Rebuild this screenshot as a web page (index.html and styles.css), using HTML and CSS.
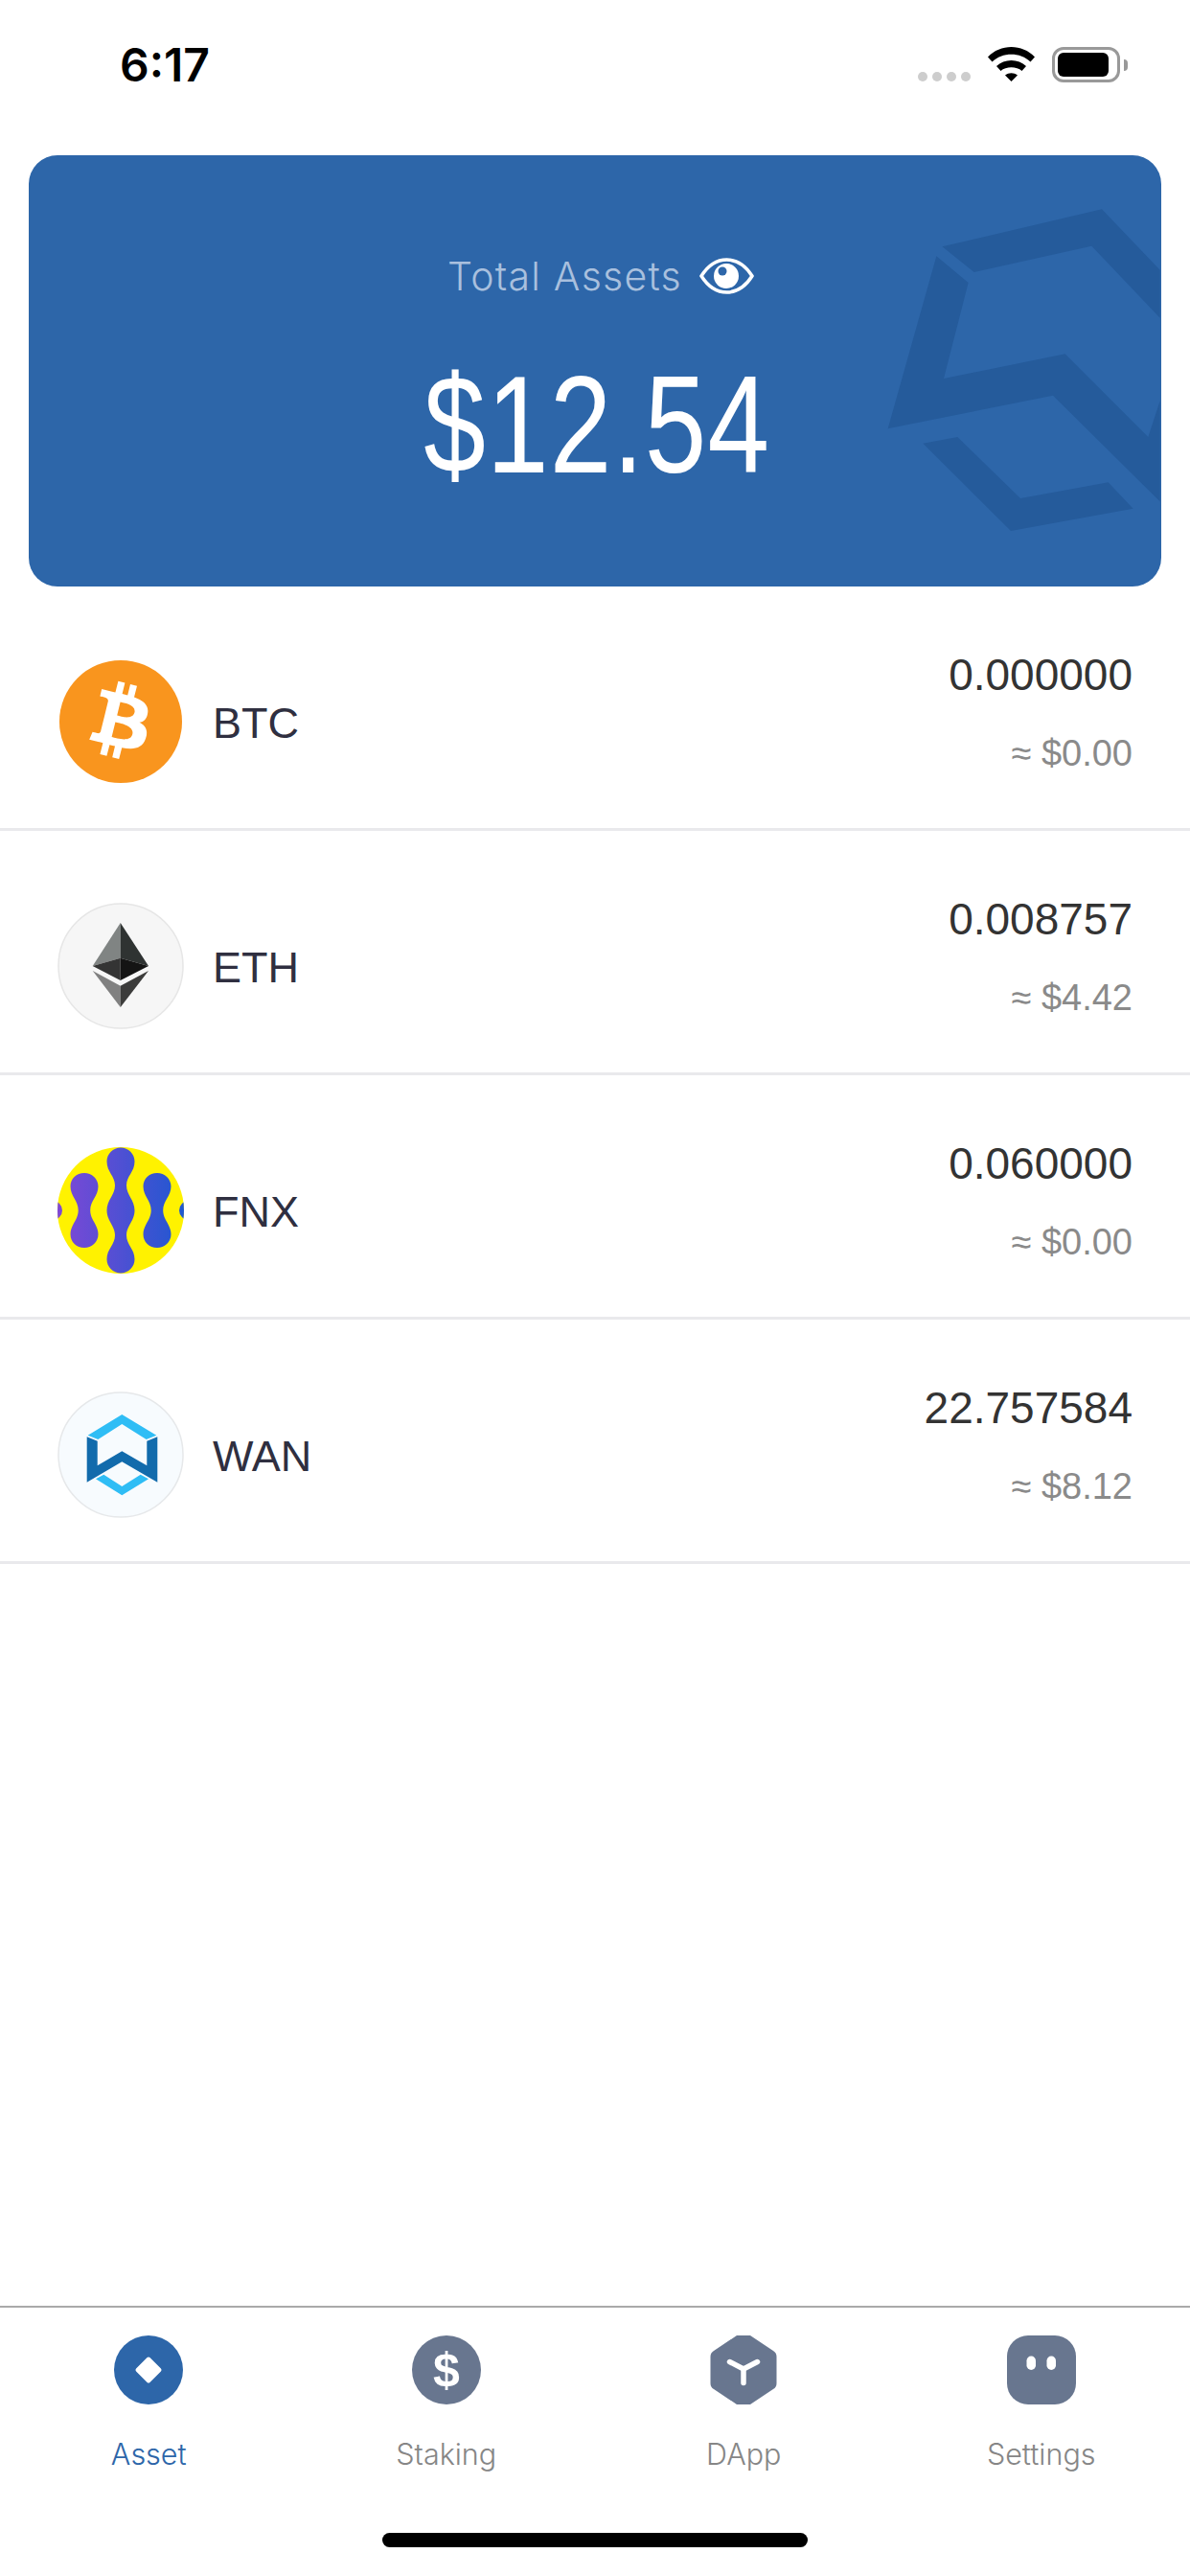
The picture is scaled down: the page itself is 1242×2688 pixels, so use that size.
FILE: index.html
```html
<!DOCTYPE html>
<html lang="en">
<head>
    <meta charset="UTF-8">
    <meta name="viewport" content="width=device-width, initial-scale=1.0">
    <title>Wallet</title>
    <link rel="stylesheet" href="styles.css">
</head>
<body>
<div class="app">
    <div class="status-bar">
        <span class="time">6:17</span>
        <div class="status-icons">
            <div class="signal"><i></i><i></i><i></i><i></i></div>
            <svg class="wifi" viewBox="0 0 49 36">
                <path d="M0 10.5C13-3.5 36-3.5 49 10.5L44.5 15.5C34 5 15 5 4.5 15.5Z"/>
                <path d="M9 20C17 12 32 12 40 20L35.5 25C30 20 19 20 13.5 25Z"/>
                <path d="M18 29.5C22 26.5 27 26.5 31 29.5L24.5 36Z"/>
            </svg>
            <div class="battery"><div class="battery-body"><div class="battery-level"></div></div><div class="battery-nub"></div></div>
        </div>
    </div>

    <div class="card">
        <svg class="card-logo" viewBox="0 6 936 1350">
            <polygon points="250,292 750,175 932,365 932,515 718,290 350,372"/>
            <polygon points="232,322 332,405 255,705 635,628 895,888 932,775 932,1090 597,758 80,862"/>
            <polygon points="190,908 298,888 495,1080 770,1030 848,1112 465,1182"/>
        </svg>
        <div class="total-row">
            <span class="total-label">Total Assets</span>
            <svg class="eye" viewBox="0 0 57 38">
                <path d="M2 19C9 8 18 2 28.5 2S48 8 55 19C48 30 39 36 28.5 36S9 30 2 19Z" fill="none" stroke="#fff" stroke-width="3.5"/>
                <circle cx="28" cy="19" r="13" fill="#fff"/>
                <circle cx="24" cy="14" r="4.5" fill="#2d66a9"/>
            </svg>
        </div>
        <div class="total-amount">$12.54</div>
    </div>

    <div class="coin-list">
        <div class="coin-row">
            <svg class="coin-icon" viewBox="0 0 132 132">
                <circle cx="66" cy="66" r="64" fill="#f9951e"/>
                <path transform="translate(2 2) scale(2)" fill="#fff" d="M46.1,27.4c0.6-4.3-2.6-6.6-7.1-8.2l1.5-5.8l-3.5-0.9l-1.4,5.7c-0.9-0.2-1.9-0.5-2.8-0.7l1.4-5.7l-3.5-0.9l-1.5,5.8c-0.8-0.2-1.5-0.3-2.2-0.5l0,0l-4.9-1.2l-0.9,3.8c0,0,2.6,0.6,2.6,0.6c1.4,0.4,1.7,1.3,1.6,2l-1.6,6.6c0.1,0,0.2,0.1,0.4,0.1c-0.1,0-0.2-0.1-0.4-0.1l-2.3,9.2c-0.2,0.4-0.6,1.1-1.6,0.8c0,0.1-2.6-0.6-2.6-0.6l-1.7,4l4.6,1.1c0.9,0.2,1.7,0.4,2.5,0.6l-1.5,5.9l3.5,0.9l1.5-5.8c1,0.3,1.9,0.5,2.8,0.7l-1.4,5.8l3.5,0.9l1.5-5.9c6,1.1,10.5,0.7,12.4-4.7c1.5-4.4-0.1-6.9-3.2-8.5C44.1,32.2,45.7,30.6,46.1,27.4z M38.1,38.6c-1.1,4.4-8.4,2-10.8,1.4l1.9-7.7C31.6,32.9,39.2,34.1,38.1,38.6z M39.2,27.3c-1,4-7.1,2-9.1,1.5l1.7-7C33.8,22.3,40.2,23.2,39.2,27.3z"/>
            </svg>
            <span class="coin-name">BTC</span>
            <div class="coin-values">
                <span class="coin-amount">0.000000</span>
                <span class="coin-usd">≈ $0.00</span>
            </div>
        </div>
        <div class="coin-row">
            <svg class="coin-icon" viewBox="0 0 132 132">
                <circle cx="66" cy="66" r="65" fill="#f6f6f6" stroke="#e6e6e6" stroke-width="1.5"/>
                <polygon points="65.7,21 36.7,66 65.7,57.7" fill="#808483"/>
                <polygon points="65.7,21 95,66 65.7,57.7" fill="#2f3332"/>
                <polygon points="36.7,66 65.7,57.7 65.7,81" fill="#343434"/>
                <polygon points="95,66 65.7,57.7 65.7,81" fill="#141414"/>
                <polygon points="36.7,71 65.7,86.7 65.7,109" fill="#808080"/>
                <polygon points="95,71 65.7,86.7 65.7,109" fill="#3c3c3b"/>
            </svg>
            <span class="coin-name">ETH</span>
            <div class="coin-values">
                <span class="coin-amount">0.008757</span>
                <span class="coin-usd">≈ $4.42</span>
            </div>
        </div>
        <div class="coin-row">
            <svg class="coin-icon" viewBox="0 0 132 132">
                <defs>
                    <linearGradient id="fnxGrad" gradientUnits="userSpaceOnUse" x1="0" y1="0" x2="132" y2="0">
                        <stop offset="0" stop-color="#7f48d6"/>
                        <stop offset="1" stop-color="#1f58d0"/>
                    </linearGradient>
                    <clipPath id="fnxClip"><circle cx="66" cy="66" r="66"/></clipPath>
                </defs>
                <g clip-path="url(#fnxClip)">
                    <rect width="132" height="132" fill="#fff200"/>
                    <g fill="url(#fnxGrad)">
                        <path d="M66 .5C74 .5 80.5 7 80.5 15C80.5 26 72 30 72 40C72 50 80.5 55 80.5 66C80.5 77 72 82 72 92C72 102 80.5 106 80.5 117C80.5 125 74 131.5 66 131.5C58 131.5 51.5 125 51.5 117C51.5 106 60 102 60 92C60 82 51.5 77 51.5 66C51.5 55 60 50 60 40C60 30 51.5 26 51.5 15C51.5 7 58 .5 66 .5Z"/>
                        <path d="M28 27C35.7 27 42.5 33 42.5 41C42.5 51 34.2 56 34.2 66C34.2 76 42.5 81 42.5 91C42.5 99 35.7 105 28 105C19.7 105 13.5 99 13.5 91C13.5 81 21.7 76 21.7 66C21.7 56 13.5 51 13.5 41C13.5 33 19.7 27 28 27Z"/>
                        <path d="M104 27C111.7 27 118.5 33 118.5 41C118.5 51 110.2 56 110.2 66C110.2 76 118.5 81 118.5 91C118.5 99 111.7 105 104 105C95.7 105 89.5 99 89.5 91C89.5 81 97.7 76 97.7 66C97.7 56 89.5 51 89.5 41C89.5 33 95.7 27 104 27Z"/>
                        <circle cx="-5" cy="66" r="10"/>
                        <circle cx="137" cy="66" r="10"/>
                    </g>
                </g>
            </svg>
            <span class="coin-name">FNX</span>
            <div class="coin-values">
                <span class="coin-amount">0.060000</span>
                <span class="coin-usd">≈ $0.00</span>
            </div>
        </div>
        <div class="coin-row">
            <svg class="coin-icon" viewBox="0 0 132 132">
                <circle cx="66" cy="66" r="65" fill="#f7fbfe" stroke="#e6e8ea" stroke-width="1.5"/>
                <polygon points="67.3,24 103.3,45.7 92.7,50 67.3,34 42.3,50 31.7,45.7" fill="#2fbdf5"/>
                <polygon points="30.7,47.3 41.7,51.7 41.7,77.3 67.3,62.3 93.3,77.3 93.3,51.7 104.3,47.3 104.3,94.7 67.3,73.3 30.7,94.7" fill="#126bac"/>
                <polygon points="40,91.3 48.3,86.7 67.3,99 86.7,86.7 95,91.3 67.3,108.3" fill="#2fbdf5"/>
            </svg>
            <span class="coin-name">WAN</span>
            <div class="coin-values">
                <span class="coin-amount">22.757584</span>
                <span class="coin-usd">≈ $8.12</span>
            </div>
        </div>
    </div>

    <div class="tab-bar">
        <div class="tabs">
            <div class="tab active">
                <svg class="tab-icon" viewBox="0 0 72 72">
                    <circle cx="36" cy="36" r="36" fill="#2d66a9"/>
                    <polygon points="36,24.5 47.5,36 36,47.5 24.5,36" fill="#fff" stroke="#fff" stroke-width="4" stroke-linejoin="round"/>
                </svg>
                <span class="tab-label">Asset</span>
            </div>
            <div class="tab">
                <svg class="tab-icon" viewBox="0 0 72 72">
                    <circle cx="36" cy="36" r="36" fill="#68768f"/>
                    <text class="tab-dollar" x="36" y="53" text-anchor="middle">$</text>
                </svg>
                <span class="tab-label">Staking</span>
            </div>
            <div class="tab">
                <svg class="tab-icon" viewBox="0 0 72 72">
                    <path d="M29 0H43L67 16Q70.5 18 70.5 22V50Q70.5 54 67 56L43 72H29L5 56Q1.5 54 1.5 50V22Q1.5 18 5 16Z" fill="#68768f"/>
                    <path d="M21.5 27.5L36 35L50.5 27.5M36 35V49.5" fill="none" stroke="#fff" stroke-width="5.5" stroke-linecap="round" stroke-linejoin="round"/>
                </svg>
                <span class="tab-label">DApp</span>
            </div>
            <div class="tab">
                <svg class="tab-icon" viewBox="0 0 72 72">
                    <rect width="72" height="72" rx="22" fill="#68768f"/>
                    <rect x="20.5" y="21.5" width="9.5" height="14.5" rx="4.75" fill="#fff"/>
                    <rect x="41.5" y="21.5" width="9.5" height="14.5" rx="4.75" fill="#fff"/>
                </svg>
                <span class="tab-label">Settings</span>
            </div>
        </div>
        <div class="home-bar"></div>
    </div>
</div>
</body>
</html>
```
FILE: styles.css
```css
* {
    box-sizing: border-box;
}
body {
    margin: 0;
    background: #fff;
    font-family: "Liberation Sans", Arial, sans-serif;
}
.app {
    display: flex;
    flex-direction: column;
    width: 1242px;
    height: 2688px;
    overflow: hidden;
}

/* status bar */
.status-bar {
    display: flex;
    justify-content: space-between;
    align-items: flex-start;
    height: 162px;
    padding: 49px 65px 0 125px;
}
.time {
    font-family: Inter, sans-serif;
    font-size: 48px;
    font-weight: 600;
    line-height: 37px;
    color: #000;
}
.status-icons {
    display: flex;
    align-items: flex-start;
    gap: 18px;
}
.signal {
    display: flex;
    gap: 5px;
    margin-top: 26px;
}
.signal i {
    width: 10px;
    height: 10px;
    border-radius: 50%;
    background: #cdcdcd;
}
.wifi {
    display: block;
    width: 49px;
    height: 36px;
}
.battery {
    display: flex;
    align-items: center;
    gap: 4px;
}
.battery-body {
    width: 71px;
    height: 37px;
    padding: 3px;
    border: 3px solid #999;
    border-radius: 12px;
}
.battery-level {
    width: 53px;
    height: 25px;
    border-radius: 6px;
    background: #000;
}
.battery-nub {
    width: 4px;
    height: 12px;
    border-radius: 0 4px 4px 0;
    background: #999;
}

/* total card */
.card {
    position: relative;
    display: flex;
    flex-direction: column;
    align-items: center;
    flex-shrink: 0;
    height: 450px;
    margin: 0 30px;
    padding-top: 101px;
    border-radius: 30px;
    background: #2d66a9;
    overflow: hidden;
}
.card-logo {
    position: absolute;
    top: 0;
    right: 0;
    width: 312px;
    height: 450px;
    fill: #255b9b;
}
.total-row {
    position: relative;
    display: flex;
    align-items: center;
    gap: 18px;
    margin-left: 12px;
    height: 50px;
}
.total-label {
    font-family: Inter, sans-serif;
    font-size: 41px;
    font-weight: 300;
    letter-spacing: 1.25px;
    color: #a9c0de;
}
.eye {
    width: 57px;
    height: 38px;
}
.total-amount {
    position: relative;
    margin-top: 58px;
    margin-left: 5px;
    font-size: 145px;
    line-height: 145px;
    letter-spacing: 1.5px;
    color: #fff;
    transform: scaleX(.8);
}

/* coin list */
.coin-list {
    flex: 1;
}
.coin-row {
    display: flex;
    align-items: center;
    height: 255px;
    padding: 30px 60px 0;
    border-bottom: 3px solid #e9e9ec;
}
.coin-icon {
    width: 132px;
    height: 132px;
    margin-right: 30px;
}
.coin-name {
    margin-top: 3px;
    font-size: 45px;
    color: #2f2f40;
}
.coin-values {
    display: flex;
    flex-direction: column;
    align-items: flex-end;
    gap: 34px;
    margin-left: auto;
    margin-top: -20px;
}
.coin-amount {
    font-size: 46px;
    line-height: 52px;
    color: #333;
}
.coin-usd {
    font-size: 38px;
    line-height: 44px;
    color: #8a8a8a;
}

/* tab bar */
.tab-bar {
    height: 282px;
    border-top: 2px solid #aaa;
}
.tabs {
    display: flex;
    padding-top: 29px;
}
.tab {
    display: flex;
    flex-direction: column;
    align-items: center;
    flex: 1;
}
.tab-icon {
    width: 72px;
    height: 72px;
}
.tab-dollar {
    font-size: 50px;
    font-weight: 700;
    fill: #fff;
}
.tab-label {
    margin-top: 34px;
    font-family: Inter, sans-serif;
    font-size: 30.5px;
    font-weight: 300;
    line-height: 36px;
    color: #868686;
}
.tab.active .tab-label {
    color: #2d66a9;
}
.home-bar {
    width: 444px;
    height: 15px;
    margin: 64px auto 0;
    border-radius: 8px;
    background: #000;
}
```
